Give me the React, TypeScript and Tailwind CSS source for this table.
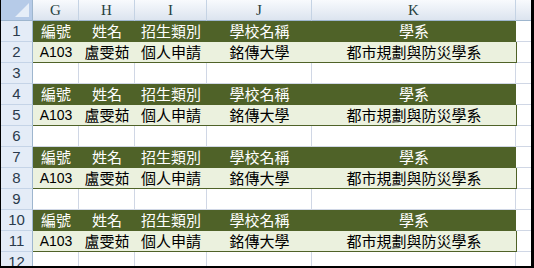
import React from 'react'

const cols = [
	{ key: 'G', w: 'w-[46px]' },
	{ key: 'H', w: 'w-[56px]' },
	{ key: 'I', w: 'w-[72px]' },
	{ key: 'J', w: 'w-[105px]' },
	{ key: 'K', w: 'w-[204px]' },
]

const head = ['編號', '姓名', '招生類別', '學校名稱', '學系']
const data = ['A103', '盧雯茹', '個人申請', '銘傳大學', '都市規劃與防災學系']

const cjk = { fontFamily: '"Noto Sans CJK TC", "Noto Sans CJK SC", sans-serif' }

function RowHead({ n }: { n: number }) {
	return (
		<div className="w-[32px] h-[21px] shrink-0 flex items-center justify-center bg-[#e4ecf7] border-r border-b border-r-[#9eb6ce] border-b-[#c5d4e7] text-[15px] text-[#2a3a4c] font-['Liberation_Sans',sans-serif]">
			{n}
		</div>
	)
}

function EmptyRow({ n }: { n: number }) {
	return (
		<div className="flex">
			<RowHead n={n} />
			{cols.map(c => (
				<div key={c.key} className={`${c.w} h-[21px] shrink-0 bg-white border-r border-b border-[#d0d7e5]`} />
			))}
			<div className="w-[15px] h-[21px] shrink-0 bg-white border-b border-[#d0d7e5]" />
		</div>
	)
}

function HeadRow({ n }: { n: number }) {
	return (
		<div className="flex">
			<RowHead n={n} />
			<div className="flex bg-[#4f6228] text-white text-[15px] h-[21px]" style={cjk}>
				{cols.map((c, i) => (
					<div key={c.key} className={`${c.w} shrink-0 flex items-center justify-center whitespace-nowrap`}>
						{head[i]}
					</div>
				))}
			</div>
			<div className="w-[15px] h-[21px] shrink-0 bg-white border-b border-[#d0d7e5]" />
		</div>
	)
}

function DataRow({ n }: { n: number }) {
	return (
		<div className="flex">
			<RowHead n={n} />
			<div className="flex bg-[#ebf1de] text-black text-[15px] h-[21px] border-b border-r border-[#4f6228]" style={cjk}>
				{cols.map((c, i) => (
					<div
						key={c.key}
						className={`${c.w} shrink-0 flex items-center justify-center whitespace-nowrap ${i === 0 ? "font-['Liberation_Sans',sans-serif] text-[14px]" : ''} ${i === 4 ? 'w-[203px]' : ''}`}
					>
						{data[i]}
					</div>
				))}
			</div>
			<div className="w-[15px] h-[21px] shrink-0 bg-white border-b border-[#d0d7e5]" />
		</div>
	)
}

export default function App() {
	const rows: React.ReactNode[] = []
	for (let n = 1; n <= 12; n++) {
		const m = n % 3
		if (m === 1) rows.push(<HeadRow key={n} n={n} />)
		else if (m === 2) rows.push(<DataRow key={n} n={n} />)
		else rows.push(<EmptyRow key={n} n={n} />)
	}

	return (
		<div className="w-[534px] h-[268px] bg-black pl-[1px] pr-[3px] pb-[2px]">
			<div className="w-[530px] h-[266px] overflow-hidden bg-white">
				<div className="flex">
					<div className="w-[32px] h-[21px] shrink-0 bg-[#b6cbe8] border-r border-b border-r-[#9eb6ce] border-b-[#9eb6ce] relative">
						<svg className="absolute right-[3px] bottom-[3px]" width="14" height="14" viewBox="0 0 14 14">
							<polygon points="14,0 14,14 0,14" fill="#e6eef8" />
						</svg>
					</div>
					{cols.map(c => (
						<div
							key={c.key}
							className={`${c.w} h-[21px] shrink-0 flex items-center justify-center bg-linear-to-b from-[#f8fafd] to-[#dce4ef] border-r border-b border-r-[#c5d3e4] border-b-[#9eb6ce] text-[15px] text-[#27413e] font-['Liberation_Serif',serif]`}
						>
							{c.key}
						</div>
					))}
					<div className="w-[15px] h-[21px] shrink-0 bg-linear-to-b from-[#f8fafd] to-[#dce4ef] border-b border-[#9eb6ce]" />
				</div>
				{rows}
			</div>
		</div>
	)
}
